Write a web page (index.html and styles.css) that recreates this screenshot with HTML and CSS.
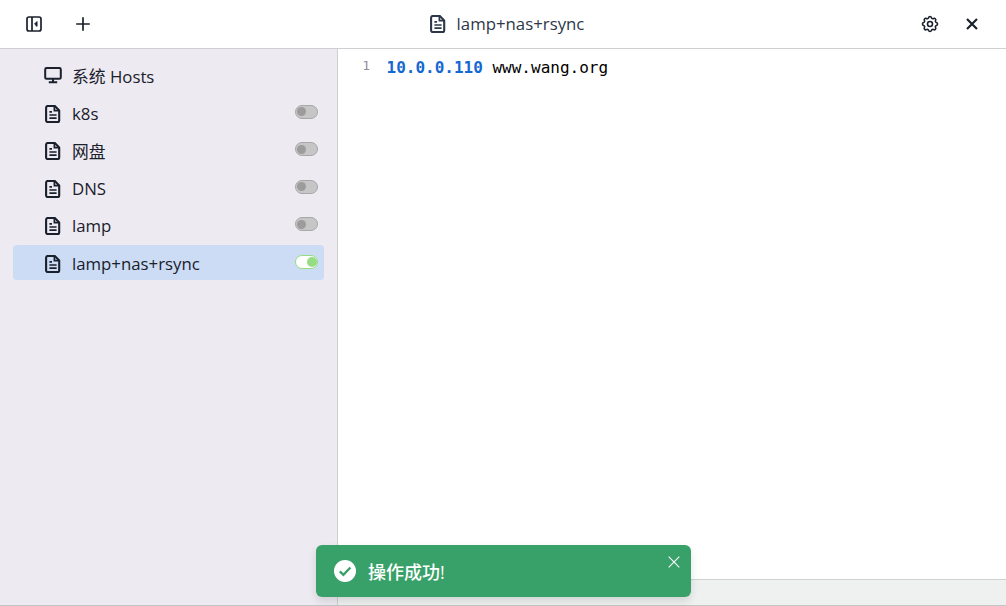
FILE: index.html
```html
<!DOCTYPE html>
<html lang="zh">
<head>
<meta charset="utf-8">
<title>SwitchHosts</title>
<link rel="stylesheet" href="styles.css">
</head>
<body>
<svg class="sprite" width="0" height="0" aria-hidden="true">
  <symbol id="file" viewBox="0 0 16 18">
    <path d="M2.8 1h7l4.4 4.4v10a1.7 1.7 0 0 1-1.7 1.7H2.8a1.7 1.7 0 0 1-1.7-1.7V2.7A1.7 1.7 0 0 1 2.8 1z" fill="none" stroke="currentColor" stroke-width="2.1" stroke-linejoin="round"/>
    <path d="M9.4 1.2v4.5h4.5M4.4 6.8h2.6M4.4 10h7.2M4.4 13.2h7.2" fill="none" stroke="currentColor" stroke-width="1.7"/>
  </symbol>
</svg>
<div class="app">
  <header class="topbar">
    <div class="tools">
      <button class="tool" aria-label="toggle sidebar">
        <svg width="16" height="16" viewBox="0 0 16 16"><rect x="1" y="1" width="14" height="14" rx="2" fill="none" stroke="currentColor" stroke-width="1.7"/><path d="M6 1v14" stroke="currentColor" stroke-width="1.7"/><path d="M11 5.6 8.6 8l2.4 2.4z" fill="currentColor" stroke="currentColor"/></svg>
      </button>
      <button class="tool" aria-label="add">
        <svg width="16" height="16" viewBox="0 0 16 16"><path d="M8 1.2v13.6M1.2 8h13.6" stroke="currentColor" stroke-width="1.7"/></svg>
      </button>
    </div>
    <div class="title">
      <svg class="file-icon" width="16" height="18"><use href="#file"/></svg>
      <span>lamp+nas+rsync</span>
    </div>
    <div class="tools tools-right">
      <button class="tool" aria-label="settings">
        <svg width="20" height="20" viewBox="0 0 24 24" fill="none" stroke="currentColor" stroke-width="1.9" stroke-linejoin="round"><path d="M10.3 4.3c.4-1.8 3-1.8 3.4 0a1.7 1.7 0 0 0 2.6 1.1c1.5-.9 3.3.8 2.4 2.4a1.7 1.7 0 0 0 1 2.5c1.8.4 1.8 3 0 3.4a1.7 1.7 0 0 0-1 2.6c.9 1.5-.9 3.3-2.4 2.4a1.7 1.7 0 0 0-2.6 1c-.4 1.8-3 1.8-3.4 0a1.7 1.7 0 0 0-2.6-1c-1.5.9-3.3-.9-2.4-2.4a1.7 1.7 0 0 0-1-2.6c-1.8-.4-1.8-3 0-3.4a1.7 1.7 0 0 0 1-2.5c-.9-1.6.9-3.3 2.4-2.4a1.7 1.7 0 0 0 2.6-1.1z"/><circle cx="12" cy="12" r="3"/></svg>
      </button>
      <button class="tool" aria-label="close">
        <svg width="14" height="14" viewBox="0 0 14 14"><path d="M2 2l10 10M12 2 2 12" stroke="currentColor" stroke-width="2.2"/></svg>
      </button>
    </div>
  </header>
  <div class="main">
    <aside class="sidebar">
      <ul class="list">
        <li class="row">
          <svg class="row-icon" width="18" height="18" viewBox="0 0 18 18" fill="none" stroke="currentColor" stroke-width="2"><rect x="1.2" y="2" width="15.6" height="10.8" rx="1.4"/><path d="M9 13v3M4.8 16.2h8.4"/></svg>
          <span class="label">系统 Hosts</span>
        </li>
        <li class="row"><svg class="row-icon doc" width="16" height="18"><use href="#file"/></svg><span class="label">k8s</span><span class="switch"></span></li>
        <li class="row"><svg class="row-icon doc" width="16" height="18"><use href="#file"/></svg><span class="label">网盘</span><span class="switch"></span></li>
        <li class="row"><svg class="row-icon doc" width="16" height="18"><use href="#file"/></svg><span class="label">DNS</span><span class="switch"></span></li>
        <li class="row"><svg class="row-icon doc" width="16" height="18"><use href="#file"/></svg><span class="label">lamp</span><span class="switch"></span></li>
        <li class="row row-active"><svg class="row-icon doc" width="16" height="18"><use href="#file"/></svg><span class="label">lamp+nas+rsync</span><span class="switch switch-on"></span></li>
      </ul>
    </aside>
    <section class="editor">
      <div class="code">
        <span class="gutter">1</span>
        <span class="line"><b class="ip">10.0.0.110</b> www.wang.org</span>
      </div>
      <div class="statusbar"></div>
    </section>
  </div>
  <div class="toast">
    <svg class="toast-icon" width="22" height="22" viewBox="0 0 22 22"><circle cx="11" cy="11" r="11" fill="#fff"/><path d="M5.8 11.4l3.6 3.5 7-7.4" fill="none" stroke="#38a169" stroke-width="2.3"/></svg>
    <span class="toast-text">操作成功!</span>
    <button class="toast-close" aria-label="close">
      <svg width="12" height="12" viewBox="0 0 12 12"><path d="M.7.7l10.6 10.6M11.3.7.7 11.3" stroke="#fff" stroke-width="1.1"/></svg>
    </button>
  </div>
</div>
</body>
</html>
```

FILE: styles.css
```css
* { box-sizing: border-box; }
html, body { margin: 0; height: 100%; overflow: hidden; }
body {
  font-family: "Open Sans", "Noto Sans CJK SC", sans-serif;
  font-size: 16.8px;
  color: #1a202c;
  background: #fff;
}
.sprite { position: absolute; }
.app {
  position: relative;
  display: flex;
  flex-direction: column;
  height: 606px;
  border-bottom: 1px solid #c4c6c6;
}
.topbar {
  flex: none;
  height: 49px;
  display: flex;
  align-items: center;
  justify-content: space-between;
  padding: 0 14px 1px 14px;
  border-bottom: 1px solid #cfced3;
  position: relative;
}
.tools { display: flex; align-items: center; gap: 9px; }
.tools-right { gap: 2px; }
.tool {
  width: 40px;
  height: 40px;
  padding: 0;
  display: flex;
  align-items: center;
  justify-content: center;
  border: 0;
  background: none;
  color: #1a202c;
}
.title {
  display: flex;
  align-items: center;
  gap: 11px;
  color: #2d3748;
  margin-left: 1px;
}
.file-icon { display: block; }
.main { flex: 1; min-height: 0; display: flex; }
.sidebar {
  flex: none;
  width: 338px;
  background: #edeaf1;
  border-right: 1px solid #cfced3;
  padding: 8px 13px 0;
}
.list { list-style: none; margin: 0; padding: 0; }
.row {
  height: 35px;
  margin-bottom: 2.5px;
  display: flex;
  align-items: center;
  padding: 0 6px 0 31px;
  border-radius: 4px;
}
.row-icon { flex: none; display: block; color: #1a202c; margin-right: 9px; }
.doc { margin-left: 1px; margin-right: 10px; margin-top: 3px; }
.label { flex: 1; white-space: nowrap; color: #1a202c; margin-left: 1px; padding-top: 2px; }
.row-active { background: #cbdcf4; }
.switch {
  position: relative;
  flex: none;
  width: 23px;
  height: 14px;
  margin-top: -1px;
  border-radius: 7px;
  background: #c6c6c6;
  border: 1px solid #a8a8a8;
}
.switch::after {
  content: "";
  position: absolute;
  left: 1px;
  top: 1.5px;
  width: 9px;
  height: 9px;
  border-radius: 50%;
  background: #9c9c9c;
}
.switch-on { background: #fff; border-color: #96dc83; }
.switch-on::after { left: auto; right: 0.5px; top: 1px; width: 10px; height: 10px; background: #96dc83; }
.editor {
  flex: 1;
  min-width: 0;
  display: flex;
  flex-direction: column;
}
.code {
  flex: 1;
  display: flex;
  align-items: flex-start;
  padding-top: 8px;
  font-family: "DejaVu Sans Mono", monospace;
  font-size: 16px;
  line-height: 22px;
  color: #000;
}
.gutter {
  width: 32px;
  text-align: right;
  font-size: 13px;
  line-height: 18px;
  color: #8f8f9c;
  margin-right: 16.5px;
}
.line { white-space: pre; }
.ip { color: #1468d1; font-weight: 700; }
.statusbar {
  flex: none;
  height: 26px;
  background: #eff1f0;
  border-top: 1px solid #cfd0d0;
}
.toast {
  position: absolute;
  left: 316px;
  top: 545px;
  width: 375px;
  height: 52px;
  display: flex;
  align-items: center;
  padding-left: 18px;
  background: #38a169;
  border-radius: 6px;
  color: #fff;
  box-shadow: 0 4px 8px rgba(0, 0, 0, 0.12);
}
.toast-icon { flex: none; display: block; }
.toast-text { margin-left: 12px; font-size: 18px; font-weight: 500; }
.toast-close {
  position: absolute;
  right: 11px;
  top: 11px;
  width: 12px;
  height: 12px;
  padding: 0;
  border: 0;
  background: none;
  display: block;
}
.toast-close svg { display: block; }
```
